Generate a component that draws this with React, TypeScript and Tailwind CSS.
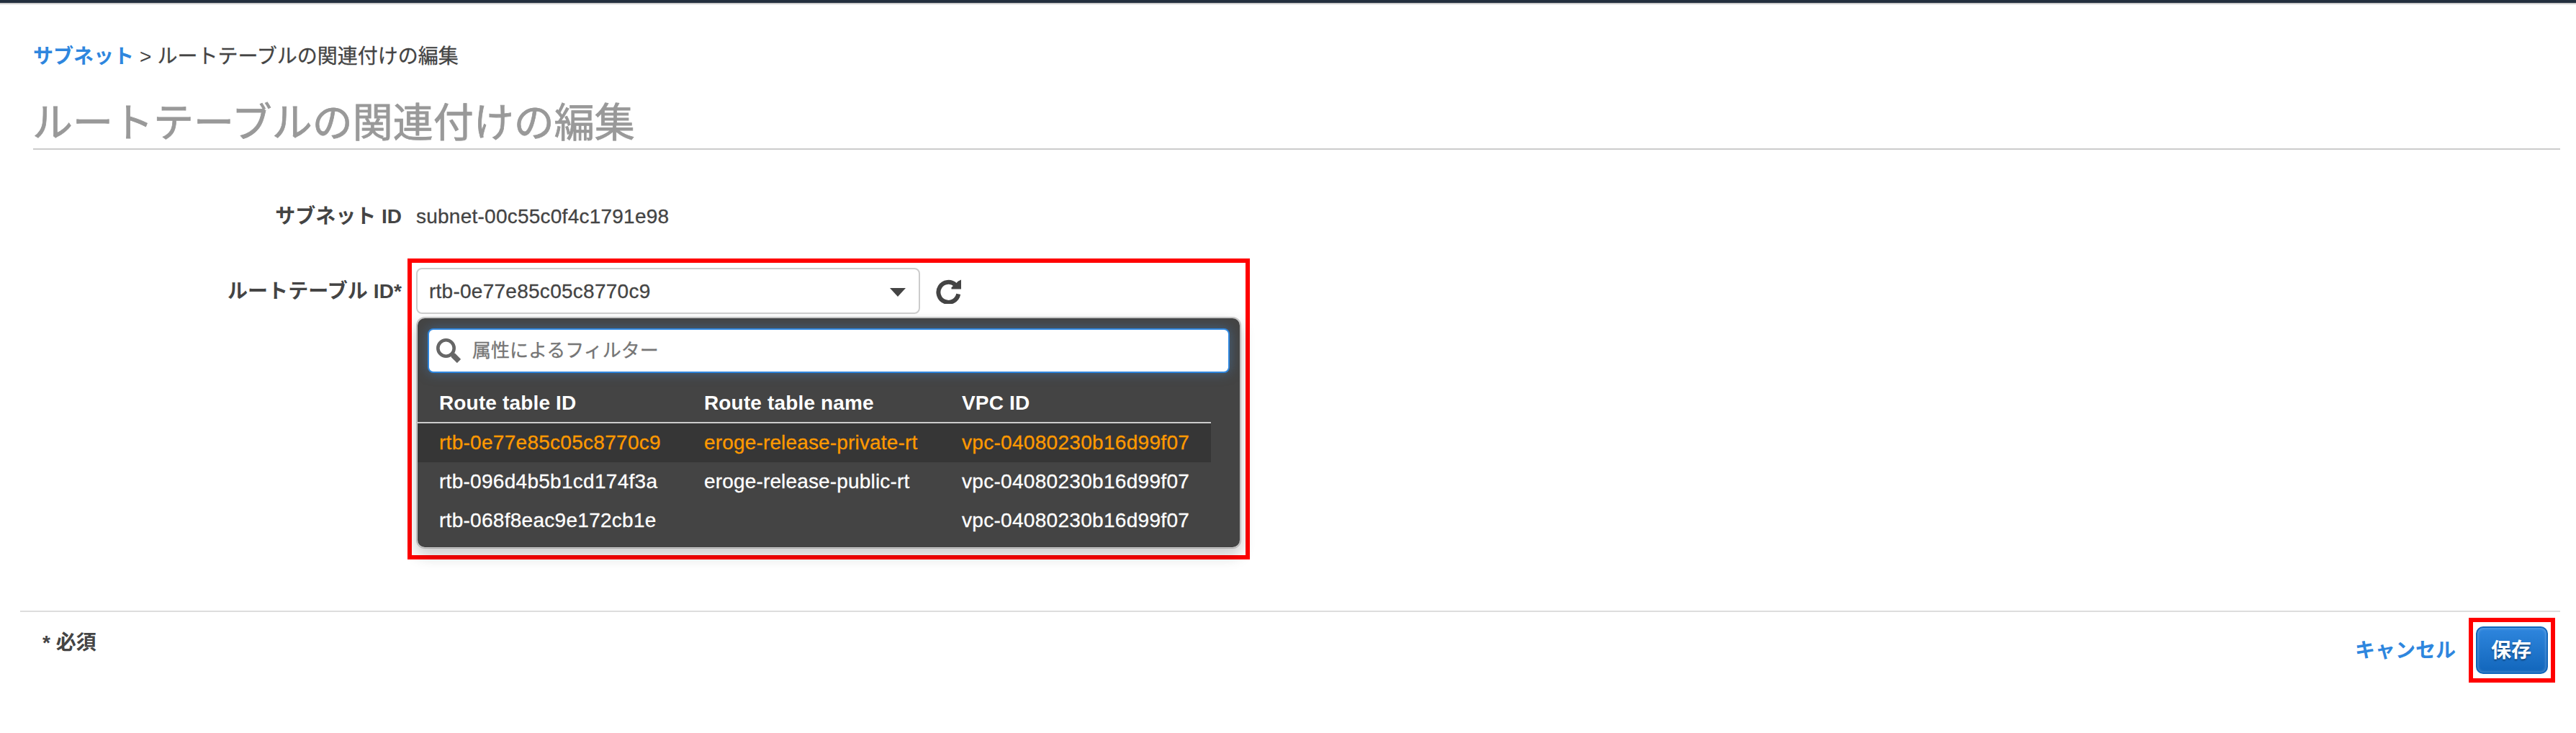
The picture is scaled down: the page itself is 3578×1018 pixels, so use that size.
const rows = [
  { id: 'rtb-0e77e85c05c8770c9', name: 'eroge-release-private-rt', vpc: 'vpc-04080230b16d99f07', selected: true },
  { id: 'rtb-096d4b5b1cd174f3a', name: 'eroge-release-public-rt', vpc: 'vpc-04080230b16d99f07', selected: false },
  { id: 'rtb-068f8eac9e172cb1e', name: '', vpc: 'vpc-04080230b16d99f07', selected: false },
];

function SearchIcon() {
  return (
    <svg className="h-[34px] w-[34px] shrink-0" viewBox="0 0 34 34" fill="none" stroke="#666">
      <circle cx="13.5" cy="13.5" r="11.2" strokeWidth="4.6" />
      <path d="M20.5 20.5 L24 24" strokeWidth="5" />
      <path d="M23 23 L31.5 31.5" strokeWidth="7.5" />
    </svg>
  );
}

function RefreshIcon() {
  return (
    <svg className="h-[35px] w-[35px] shrink-0" viewBox="0 0 35 35">
      <path d="M27 8.6 A14 14 0 1 0 31.2 21.4" fill="none" stroke="#444" strokeWidth="6" />
      <path d="M35 1.5 V14.6 H21.5 V12.2 L31 3.6 Z" fill="#444" />
    </svg>
  );
}

function RouteTablePicker() {
  return (
    <div className="h-[418px] w-[1170px] border-6 border-[#ff0000] px-1.5 pt-[7px]">
      <div className="flex items-center">
        <div className="flex h-16 w-[700px] items-center justify-between rounded-lg border-2 border-[#ccc] bg-white pl-4 pr-[18px]">
          <span className="mt-0.5 tracking-[0.26px] [-webkit-text-stroke:0.3px]">rtb-0e77e85c05c8770c9</span>
          <svg className="mt-1 h-3 w-[22px]" viewBox="0 0 22 12">
            <path d="M0 0 H22 L11 12 Z" fill="#444" />
          </svg>
        </div>
        <div className="ml-[22px]">
          <RefreshIcon />
        </div>
      </div>
      <div className="mt-1 h-[322px] w-[1146px] rounded-xl border-2 border-black/20 bg-[#444] bg-clip-padding pt-3.5 text-white shadow-[0_10px_20px_rgba(0,0,0,0.2)]">
        <div className="ml-3.5 flex h-[62px] w-[1114px] items-center rounded-lg border-2 border-[#2e86de] bg-white pl-2.5 text-[26px] text-[#757575] shadow-[0_0_16px_rgba(70,130,190,0.5)]">
          <SearchIcon />
          <span className="ml-4 [-webkit-text-stroke:0.3px]">属性によるフィルター</span>
        </div>
        <div className="w-[1102px]">
          <div className="mt-3.5 grid h-[56px] grid-cols-[368px_358px_1fr] items-center border-b-2 border-[#ccc] pl-[30px] pt-0.5 font-bold tracking-[0.15px]">
            <span>Route table ID</span>
            <span>Route table name</span>
            <span>VPC ID</span>
          </div>
          {rows.map((row) => (
            <div
              key={row.id}
              className={
                row.selected
                  ? 'grid h-[54px] grid-cols-[368px_358px_1fr] items-center bg-[#363636] pl-[30px] text-[#ff9900] [-webkit-text-stroke:0.3px]'
                  : 'grid h-[54px] grid-cols-[368px_358px_1fr] items-center pl-[30px] [-webkit-text-stroke:0.3px]'
              }
            >
              <span className="tracking-[0.28px]">{row.id}</span>
              <span className="tracking-[0.16px]">{row.name}</span>
              <span className="tracking-[0.3px]">{row.vpc}</span>
            </div>
          ))}
        </div>
      </div>
    </div>
  );
}

export default function App() {
  return (
    <div className="h-[1018px] w-full bg-white font-['Liberation_Sans','Noto_Sans_CJK_JP',sans-serif] text-[28px] leading-10 text-[#444]">
      <div className="h-1.5 border-b-2 border-[#ccc] bg-[#232f3e]" />
      <nav className="ml-[46px] mt-[53px] flex h-10 items-center">
        <a className="font-bold text-[#2e86de]">サブネット</a>
        <span className="mx-2">&gt;</span>
        <span className="[-webkit-text-stroke:0.3px]">ルートテーブルの関連付けの編集</span>
      </nav>
      <h1 className="ml-[46px] mr-[22px] mt-[29px] flex h-20 items-center border-b-2 border-[#ccc] pt-2 text-[56px] text-[#999] [-webkit-text-stroke:0.8px]">
        <span className="-ml-px">ルートテーブルの関連付けの編集</span>
      </h1>
      <div className="mt-[73px] flex h-10 items-center">
        <span className="w-[558px] text-right font-bold">サブネット ID</span>
        <span className="ml-5 tracking-[0.24px] [-webkit-text-stroke:0.3px]">subnet-00c55c0f4c1791e98</span>
      </div>
      <div className="mt-[38px] flex items-start">
        <span className="mt-[26px] w-[558px] text-right font-bold tracking-[0.1px]">ルートテーブル ID*</span>
        <div className="ml-2">
          <RouteTablePicker />
        </div>
      </div>
      <footer className="ml-7 mr-[22px] mt-[71px] flex items-start justify-between border-t-2 border-[#ddd]">
        <span className="ml-[31px] mt-[23px] font-bold">* 必須</span>
        <div className="mr-[7px] mt-2 flex items-center">
          <a className="mr-[18px] mt-0.5 font-bold text-[#2e86de]">キャンセル</a>
          <div className="flex h-[90px] w-[120px] items-center justify-center border-6 border-[#ff0000]">
            <button className="h-[66px] w-[100px] rounded-[10px] border-2 border-[#1166bb] bg-linear-to-b from-[#2e86de] to-[#1166bb] pr-0.5 pt-0.5 font-bold text-white shadow-[inset_0_0_4px_rgba(255,255,255,0.4)] [text-shadow:0_2px_2px_rgba(0,0,0,0.4)]">
              保存
            </button>
          </div>
        </div>
      </footer>
    </div>
  );
}
